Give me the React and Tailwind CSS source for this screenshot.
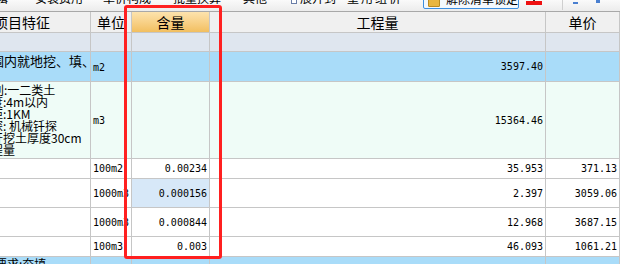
import React from "react";

const grid = "grid grid-cols-[91px_41px_78px_336px_74px]";
const cell = "border-r border-b border-[#c6c6c6] overflow-hidden";
const num = "font-['DejaVu_Sans_Mono',monospace] text-[10px] text-black";
const cjk = "font-['Noto_Sans_CJK_SC',sans-serif] text-black";

const rows = [
  { h: "h-[20px]", unit: "100m2", qty: "0.00234", amount: "35.953", price: "371.13" },
  { h: "h-[29px]", unit: "1000m3", qty: "0.000156", amount: "2.397", price: "3059.06", sel: true },
  { h: "h-[29px]", unit: "1000m3", qty: "0.000844", amount: "12.968", price: "3687.15" },
  { h: "h-[20px]", unit: "100m3", qty: "0.003", amount: "46.093", price: "1061.21" },
];

const features = [
  { text: "别:一二类土", ml: "ml-[-8px]" },
  { text: "度:4m以内", ml: "ml-[-9px]" },
  { text: "距:1KM", ml: "ml-[-9px]" },
  { text: "探: 机械钎探", ml: "ml-[-9px]" },
  { text: "开挖土厚度30cm", ml: "ml-[-9px]" },
  { text: "程量", ml: "ml-[-9px]" },
];

const Toolbar = () => (
  <div className={`h-[12px] flex items-start overflow-hidden whitespace-nowrap bg-gradient-to-b from-[#fafafa] to-[#ececec] border-b border-[#a8a8a8] text-[12px] leading-[12px] ${cjk}`}>
    <span className="shrink-0 ml-[-4px] mt-[-8px]">辑</span>
    <span className="shrink-0 ml-[27px] mt-[-8px]">安装费用</span>
    <span className="shrink-0 ml-[20px] mt-[-8px]">单价构成</span>
    <span className="shrink-0 ml-[22px] mt-[-8px]">批量换算</span>
    <span className="shrink-0 ml-[22px] mt-[-8px]">其他</span>
    <span className="shrink-0 ml-[24px] mt-[-4px] w-[6px] h-[8px] border border-[#6a7ea8] bg-white" />
    <span className="shrink-0 ml-[3px] mt-[-8px]">展开到</span>
    <span className="shrink-0 ml-[11px] mt-[-8px] tracking-[2px]">重用组价</span>
    <div className="shrink-0 ml-[20px] mt-[-4px] w-[96px] h-[13px] flex items-start border border-[#3d8fe0] rounded-[2px] bg-[#f3f8fd]">
      <span className="shrink-0 ml-[4px] w-[12px] h-[10px] rounded-[1px] bg-[#e9b640] border border-[#b98a20]" />
      <span className="shrink-0 ml-[6px] mt-[-4px]">解除清单锁定</span>
    </div>
    <div className="shrink-0 ml-[7px] flex flex-col items-center w-[16px]">
      <span className="w-[2px] h-[1px] bg-[#333]" />
      <span className="w-[16px] h-[4px] bg-[#ee1111]" />
    </div>
    <span className="shrink-0 ml-[20px] w-[1px] h-[10px] bg-[#cfcfcf]" />
    <span className="shrink-0 ml-[10px] mt-[2px] w-[5px] h-[2px] bg-[#4a7fd0]" />
    <span className="shrink-0 ml-[18px] w-[4px] h-[3px] bg-[#4a7fd0]" />
  </div>
);

const App = () => {
  return (
    <div className="relative w-[620px] h-[264px] overflow-hidden bg-white">
      <Toolbar />

      {/* header */}
      <div className={`${grid} h-[21px] bg-[#f0f0f0] text-[14px] ${cjk}`}>
        <div className={`${cell} flex items-center`}>
          <span className="ml-[-6px] whitespace-nowrap">项目特征</span>
        </div>
        <div className={`${cell} flex items-center justify-center`}>单位</div>
        <div className={`${cell} flex items-center justify-center bg-gradient-to-b from-[#fde3ad] to-[#f2bf5f]`}>含量</div>
        <div className={`${cell} flex items-center justify-center`}>工程量</div>
        <div className={`${cell} flex items-center justify-center`}>单价</div>
      </div>

      {/* group row */}
      <div className={`${grid} h-[19px] bg-[#dfe6ef]`}>
        <div className={cell} />
        <div className={cell} />
        <div className={cell} />
        <div className={cell} />
        <div className={cell} />
      </div>

      {/* selected item */}
      <div className={`${grid} h-[30px] bg-[#a9dcf9]`}>
        <div className={`${cell} pt-[2px] text-[13px] leading-[14px] whitespace-nowrap ${cjk}`}>
          <span className="block ml-[-9px]">围内就地挖、填、</span>
        </div>
        <div className={`${cell} flex items-center pl-[2px] pt-[2px] ${num}`}>m2</div>
        <div className={cell} />
        <div className={`${cell} flex items-center justify-end pr-[2px] ${num}`}>3597.40</div>
        <div className={cell} />
      </div>

      {/* feature description */}
      <div className={`${grid} h-[77px] bg-[#effcf7]`}>
        <div className={`${cell} pt-[2px] text-[12px] leading-[12px] whitespace-nowrap ${cjk}`}>
          {features.map((f) => (
            <span key={f.text} className={`block ${f.ml}`}>{f.text}</span>
          ))}
        </div>
        <div className={`${cell} flex items-center pl-[2px] ${num}`}>m3</div>
        <div className={cell} />
        <div className={`${cell} flex items-center justify-end pr-[2px] ${num}`}>15364.46</div>
        <div className={cell} />
      </div>

      {rows.map((r, i) => (
        <div key={i} className={`${grid} ${r.h} bg-white`}>
          <div className={cell} />
          <div className={`${cell} flex items-center pl-[2px] whitespace-nowrap ${num}`}>{r.unit}</div>
          <div className={`${cell} flex items-center justify-end pr-[2px] ${num} ${r.sel ? "bg-[#d7e8f8]" : ""}`}>{r.qty}</div>
          <div className={`${cell} flex items-center justify-end pr-[2px] ${num}`}>{r.amount}</div>
          <div className={`${cell} flex items-center justify-end pr-[2px] ${num}`}>{r.price}</div>
        </div>
      ))}

      {/* next item */}
      <div className={`${grid} h-[20px] bg-[#a9dcf9]`}>
        <div className={`${cell} pt-[1px] text-[12px] leading-[12px] whitespace-nowrap ${cjk}`}>
          <span className="block ml-[-5px]">要求:夯填</span>
        </div>
        <div className={cell} />
        <div className={cell} />
        <div className={cell} />
        <div className={cell} />
      </div>

      {/* highlight frame */}
      <div className="absolute left-[124px] top-[5px] w-[98px] h-[254px] border-[3px] border-[#ff2020] rounded-[3px]" />
    </div>
  );
};

export default App;
